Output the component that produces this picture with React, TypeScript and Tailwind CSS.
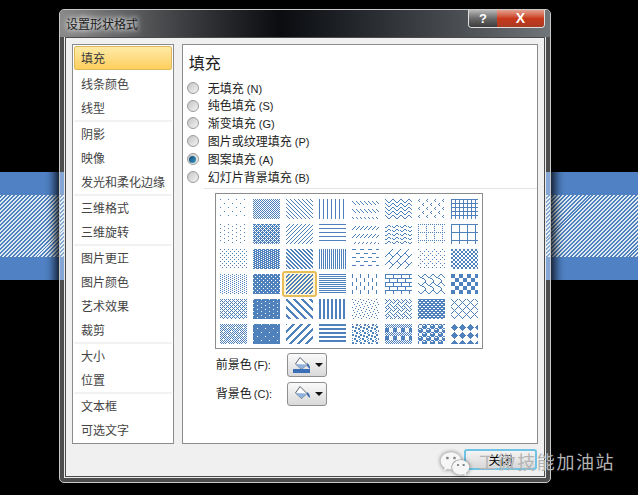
import { FaWeixin } from "react-icons/fa";

const cjk = "font-['Noto_Sans_CJK_SC','Liberation_Sans',sans-serif]";

const menuGroups = [
  ["填充", "线条颜色", "线型"],
  ["阴影", "映像", "发光和柔化边缘"],
  ["三维格式", "三维旋转"],
  ["图片更正", "图片颜色", "艺术效果", "裁剪"],
  ["大小", "位置"],
  ["文本框", "可选文字"],
];

const fills = [
  { label: "无填充", key: "N" },
  { label: "纯色填充", key: "S" },
  { label: "渐变填充", key: "G" },
  { label: "图片或纹理填充", key: "P" },
  { label: "图案填充", key: "A", checked: true },
  { label: "幻灯片背景填充", key: "B" },
];

// 8x8 bitmaps, one hex byte per row, in the order the picker shows them
const patterns = [
  // row 1
  "8000000008000000", "aa55aa55aa55aa55", "8844221188442211", "8888888888888888",
  "0000884422110000", "8142241881422418", "4080400004080400", "ff888888ff888888",
  // row 2
  "8000080080000800", "ee55bb55ee55bb55", "1122448811224488", "ff000000ff000000",
  "0000112244880000", "001825c0001825c0", "aa00800080008000", "ff80808080808080",
  // row 3
  "8800220088002200", "77dd77dd77dd77dd", "cc663399cc663399", "aaaaaaaaaaaaaaaa",
  "f00000000f000000", "0102040818244281", "8000220008002200", "cccc3333cccc3333",
  // row 4
  "8822882288228822", "77ffddff77ffddff", "3366cc993366cc99", "ff00ff00ff00ff00",
  "8080808008080808", "ff808080ff080808", "038448300c020101", "f0f0f0f00f0f0f0f",
  // row 5
  "aa44aa11aa44aa11", "7ffff7ff7ffff7ff", "c1e070381c0e0783", "cccccccccccccccc",
  "8010024004200108", "8854224588142251", "ff66ff99ff66ff99", "8244281028448201",
  // row 6
  "aa55aa54aa55aa45", "7ffffffff7ffffff", "83070e1c3870e0c1", "ffff0000ffff0000",
  "8c0dc0d81b03b031", "aa55aa55f0f0f0f0", "77898f8f7798f8f8", "10387cfe7c381000",
];

const TILE_W = 27;
const TILE_H = 20;

function tilePath(hex: string) {
  let d = "";
  for (let y = 0; y < TILE_H; y++) {
    const byte = parseInt(hex.slice((y % 8) * 2, (y % 8) * 2 + 2), 16);
    for (let x = 0; x < TILE_W; x++) {
      if (byte & (0x80 >> (x % 8))) d += `M${x} ${y}h1v1h-1z`;
    }
  }
  return d;
}

function PatternTile({ hex, selected }: { hex: string; selected?: boolean }) {
  return (
    <div className="relative h-5 w-[27px]">
      {selected ? (
        <div className="absolute -inset-x-[4px] -inset-y-[3px] rounded-[3px] border-2 border-[#e9bd5a] bg-[#fdf3d6]" />
      ) : null}
      <svg width={TILE_W} height={TILE_H} className="relative block blur-[0.4px]" shapeRendering="crispEdges">
        <path d={tilePath(hex)} fill="#4f81bd" />
      </svg>
    </div>
  );
}

function Radio({ checked }: { checked?: boolean }) {
  return (
    <span className="flex size-3 items-center justify-center rounded-full border border-[#9a9a9a] bg-gradient-to-br from-[#c4c4c4] to-[#f4f4f4]">
      {checked ? <span className="size-[7px] rounded-full bg-gradient-to-br from-[#0f4a72] to-[#3f9ac8]" /> : null}
    </span>
  );
}

function BucketButton({ filled }: { filled?: boolean }) {
  return (
    <div className="flex h-6 w-10 items-center rounded-[3px] border border-[#8e8f8f] bg-gradient-to-b from-[#fafafa] to-[#d9d9d9] pl-[4px]">
      <svg width="20" height="18" viewBox="0 0 20 18">
        <path d="M8 1.5 L15 8.5 L9.5 13.5 L3.5 8 Z" fill="#fff" stroke="#5c6670" strokeWidth="1" />
        <path d="M3.5 8 L15 8.5 L9.5 13.5 Z" fill="#8fb2dc" />
        <path d="M15 7 Q18.5 9.5 18 13 Q16 11.5 15 10 Z" fill="#3f6fb0" />
        {filled ? <rect x="1" y="13" width="17" height="4" fill="#3a6fb7" /> : null}
      </svg>
      <svg width="8" height="4" viewBox="0 0 8 4" className="ml-[3px]">
        <path d="M0 0H8L4 4Z" fill="#111" />
      </svg>
    </div>
  );
}

export default function App() {
  return (
    <div className={`relative h-[495px] w-[638px] overflow-hidden bg-black ${cjk}`}>
      {/* slide behind the dialog */}
      <div className="pt-[172px]">
        <div className="h-[23px] bg-[#4f81c4]" />
        <div className="h-[62px] bg-[repeating-linear-gradient(135deg,#dfeaf4_0px,#dfeaf4_1.4px,#4f81bd_1.4px,#4f81bd_2.8px)]" />
        <div className="h-[23px] bg-[#4f81c4]" />
      </div>

      {/* dialog window */}
      <div className="absolute left-[59px] top-[9px] flex h-[474px] w-[492px] flex-col rounded-[5px] border border-[#c8c8c8] bg-white/30 shadow-[0_0_10px_4px_rgba(0,0,0,0.85)]">
        <div className="relative flex h-[27px] shrink-0 items-center rounded-t-[4px] bg-gradient-to-r from-[#8a8a8a] via-[#0a0c10] via-45% to-[#70757a] pl-[6px]">
          <span className="text-xs text-[#1c1c1c] [text-shadow:0_0_5px_#ffffff,0_0_8px_#ffffff]">设置形状格式</span>
          <div className="absolute right-[5px] top-0 flex h-[18px] overflow-hidden rounded-b-[4px] border border-t-0 border-[#e0e0e0]">
            <div className="flex w-[28px] items-center justify-center bg-gradient-to-b from-[#b8b8b8] via-[#6a6a6a] to-[#3c3c3c] font-['Liberation_Sans',sans-serif] text-[13px] font-bold text-white">
              ?
            </div>
            <div className="flex w-[47px] items-center justify-center bg-gradient-to-b from-[#e3a08f] via-[#c8391a] to-[#a83a22] font-['Liberation_Sans',sans-serif] text-[14px] font-bold text-white">
              X
            </div>
          </div>
        </div>

        <div className="mx-[5px] flex h-[440px] flex-col border border-[#4a4a4a] bg-[#f0f0f0] shadow-[0_0_0_1px_#e8e8e8]">
          <div className="flex gap-[8px] px-[6px] pt-[6px]">
            {/* category list */}
            <div className="h-[400px] w-[102px] border border-[#8c8c8c] bg-white px-px pt-px">
              {menuGroups.map((group, g) => (
                <div key={g} className="border-b-2 border-[#f2f2f2] last:border-b-0">
                  {group.map((item, i) => (
                    <div
                      key={item}
                      className={
                        g === 0 && i === 0
                          ? "mb-[2px] flex h-6 items-center rounded-[2px] border border-[#e0b95c] bg-gradient-to-b from-[#fdeaa5] to-[#fdcf5c] pl-[6px] text-xs text-[#3a3a3a]"
                          : "flex h-6 items-center pl-[7px] text-xs text-[#444444]"
                      }
                    >
                      {item}
                    </div>
                  ))}
                </div>
              ))}
            </div>

            {/* fill panel */}
            <div className="h-[400px] w-[357px] border border-[#8c8c8c] bg-white pl-[4px] pt-[6px]">
              <div className="ml-[2px] text-base leading-[22px] text-[#222222]">填充</div>
              <div className="mt-[6px] flex flex-col">
                {fills.map((fill) => (
                  <label key={fill.key} className="flex h-[17.8px] items-center gap-[9px] text-xs text-[#222222]">
                    <Radio checked={fill.checked} />
                    <span>
                      {fill.label}
                      <span className="ml-[3px] font-['Liberation_Sans',sans-serif] text-[11px]">({fill.key})</span>
                    </span>
                  </label>
                ))}
              </div>

              <div className="ml-[17px] mt-[2px] h-px bg-[#e4e4e4]" />

              <div className="ml-[28px] mt-[4px] grid h-[156px] w-[268px] grid-cols-[repeat(8,27px)] grid-rows-[repeat(6,20px)] gap-x-[6px] gap-y-[5px] border border-[#8c8c8c] pl-[4px] pt-[5px]">
                {patterns.map((hex, i) => (
                  <PatternTile key={i} hex={hex} selected={i === 26} />
                ))}
              </div>

              <div className="ml-[29px] mt-[4px] flex h-6 items-center text-xs text-[#222222]">
                <span className="w-[71px]">
                  前景色<span className="ml-[2px] font-['Liberation_Sans',sans-serif] text-[11px]">(F):</span>
                </span>
                <BucketButton filled />
              </div>
              <div className="ml-[29px] mt-[5px] flex h-6 items-center text-xs text-[#222222]">
                <span className="w-[71px]">
                  背景色<span className="ml-[2px] font-['Liberation_Sans',sans-serif] text-[11px]">(C):</span>
                </span>
                <BucketButton />
              </div>
            </div>
          </div>

          <div className="flex justify-end pr-[7px] pt-[5px]">
            <button
              type="button"
              className="h-[21px] w-[73px] rounded-[3px] border-2 border-[#6fc3e4] bg-gradient-to-b from-[#f4f4f4] to-[#d8d8d8] text-xs text-black"
            >
              关闭
            </button>
          </div>
        </div>
      </div>

      {/* watermark */}
      <div className="absolute left-[440px] top-[449px] flex items-start text-[#b4b4b4]">
        <FaWeixin size={30} className="text-[#f6f6f6] drop-shadow-[0_0_2px_rgba(0,0,0,0.55)]" />
        <span className="ml-[8px] text-[18px] leading-6 tracking-[1.6px]">工微技能加油站</span>
      </div>
    </div>
  );
}
